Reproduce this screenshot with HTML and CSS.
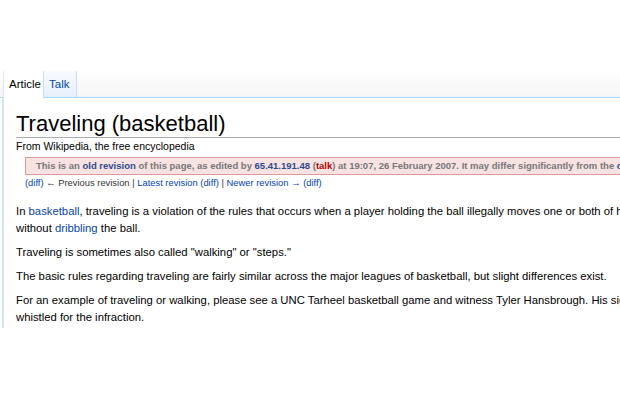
FILE: index.html
```html
<!DOCTYPE html>
<html>
<head>
<meta charset="utf-8">
<link rel="stylesheet" href="styles.css">
</head>
<body>
<div class="top"></div>
<div class="tabbar">
  <div class="tab tab-active">Article</div>
  <div class="tab tab-talk"><a class="link">Talk</a></div>
</div>
<div class="content">
  <h1 class="title">Traveling (basketball)</h1>
  <div class="sub">From Wikipedia, the free encyclopedia</div>
  <div class="notice">This is an <a class="nlink">old revision</a> of this page, as edited by <a class="nlink">65.41.191.48</a> (<a class="red">talk</a>) at 19:07, 26 February 2007. It may differ significantly from the <a class="nlink">current revision</a>.</div>
  <div class="revnav"><a class="link">(diff)</a> ← Previous revision | <a class="link">Latest revision</a> <a class="link">(diff)</a> | <a class="link">Newer revision →</a> <a class="link">(diff)</a></div>
  <p class="para">In <a class="link">basketball</a>, traveling is a violation of the rules that occurs when a player holding the ball illegally moves one or both of his feet<br>without <a class="link">dribbling</a> the ball.</p>
  <p class="para">Traveling is sometimes also called "walking" or "steps."</p>
  <p class="para">The basic rules regarding traveling are fairly similar across the major leagues of basketball, but slight differences exist.</p>
  <p class="para">For an example of traveling or walking, please see a UNC Tarheel basketball game and witness Tyler Hansbrough. His signature move is rarely<br>whistled for the infraction.</p>
</div>
</body>
</html>
```
FILE: styles.css
```css
html, body {
  margin: 0;
  padding: 0;
  background: #fff;
  overflow: hidden;
  width: 620px;
}
body {
  font-family: "Liberation Sans", Arial, sans-serif;
  color: #000;
}
.top {
  height: 70px;
}
.tabbar {
  height: 27px;
  display: flex;
  align-items: flex-end;
  padding-left: 3px;
  background: linear-gradient(to bottom, #ffffff 0%, #f5f5f5 100%);
  border-bottom: 1px solid #a7d7f9;
  white-space: nowrap;
}
.tab {
  height: 26px;
  box-sizing: border-box;
  font-size: 11.5px;
  line-height: 26px;
  padding: 0 5px;
  border-right: 1px solid #c9def3;
}
.tab-active {
  background: #fff;
  color: #000;
  width: 41px;
  border-left: 1px solid #d8e8f7;
  height: 27px;
  margin-bottom: -1px;
}
.tab-talk {
  background: linear-gradient(to bottom, #f7fbff 0%, #e6f0fb 100%);
  width: 33px;
}
.link {
  color: #0645ad;
  text-decoration: none;
}
.content {
  margin-left: 2px;
  border-left: 2px solid #cfe6f8;
  padding: 13px 0 2px 12px;
  white-space: nowrap;
  overflow: hidden;
}
.title {
  margin: 0;
  font-weight: normal;
  font-size: 22px;
  line-height: 26px;
  border-bottom: 1px solid #aaa;
  padding-bottom: 0;
}
.sub {
  font-size: 10.5px;
  margin-top: 2px;
  line-height: 13px;
}
.notice {
  margin: 4px 0 0 9px;
  background: #f9e2e2;
  border: 1px solid #dd9a9a;
  border-right: none;
  font-size: 9.5px;
  font-weight: bold;
  color: #777;
  padding: 2px 0 2px 10px;
  line-height: 12px;
}
.nlink {
  color: #2d4a8c;
}
.red {
  color: #ba0000;
}
.revnav {
  margin: 1px 0 0 9px;
  font-size: 9.4px;
  line-height: 14px;
  color: #333;
}
.para {
  margin: 13px 0 0 0;
  font-size: 11.3px;
  line-height: 17px;
}
.para + .para {
  margin-top: 7px;
}
```
